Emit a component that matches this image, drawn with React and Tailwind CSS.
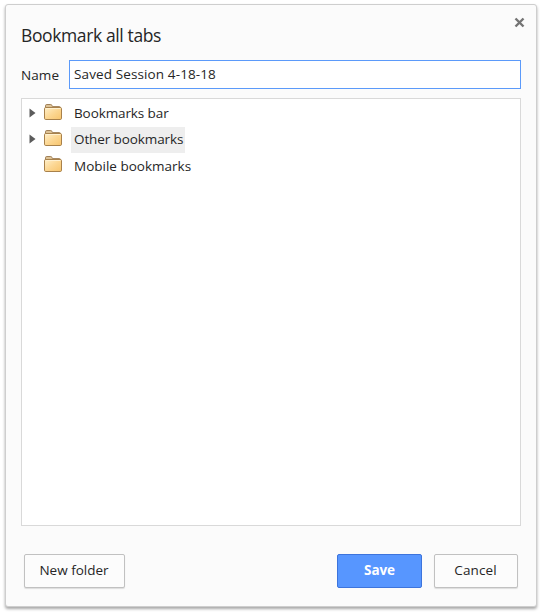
import React, { useId } from "react";

function FolderIcon() {
  const id = useId();
  return (
    <svg width="20" height="18" viewBox="0 0 20 18" className="mb-[4px] shrink-0">
      <defs>
        <linearGradient id={id} x1="0" y1="0" x2="1" y2="1">
          <stop offset="0" stopColor="#fff0cb" />
          <stop offset="0.5" stopColor="#fcd793" />
          <stop offset="1" stopColor="#f7c46c" />
        </linearGradient>
      </defs>
      <path d="M2.5 5V2.8Q2.5 1.5 3.8 1.5H7.7Q8.7 1.5 9 2.6L9.4 3.6H16.5Q17.5 3.6 17.5 5" fill="#dcc296" stroke="#a18058" />
      <rect x="1.5" y="4.5" width="17" height="12" rx="1.3" fill={`url(#${id})`} stroke="#a8814b" />
      <path d="M2.5 5.5H17.5" stroke="#fff1d0" />
    </svg>
  );
}

function TreeRow({ label, expandable, selected }) {
  return (
    <div className="flex h-[26px] items-center">
      <span className="flex w-[21px] shrink-0 pb-[2px] pl-[7px]">
        {expandable && (
          <svg width="7" height="10" viewBox="0 0 7 10">
            <path d="M.5.5L6.5 5L.5 9.5Z" fill="#5c5c5c" />
          </svg>
        )}
      </span>
      <FolderIcon />
      <span className={`ml-2 flex h-[26px] items-center px-[3px] ${selected ? "bg-[#eeeeee] pr-[2px] pb-px" : ""} ${expandable ? "pb-px" : "tracking-[0px]"}`}>
        {label}
      </span>
    </div>
  );
}

export default function App() {
  return (
    <div className="h-[615px] w-[544px] overflow-hidden bg-white pt-1 pl-[5px] font-['Open_Sans','Noto_Sans',sans-serif] text-[13.5px] tracking-[-0.1px] text-[#262626]">
      <div className="relative flex h-[603px] w-[532px] flex-col rounded-[3px] border border-[#cecece] bg-[#fbfbfb] px-[15px] shadow-[0_2px_3px_rgba(0,0,0,0.35)]">
        <button aria-label="Close" className="absolute top-[12px] right-[11px]">
          <svg width="11" height="11" viewBox="0 0 11 11" className="block">
            <path d="M1.5 1.5L9.5 9.5M9.5 1.5L1.5 9.5" stroke="#747474" strokeWidth="2.4" />
          </svg>
        </button>
        <h1 className="mt-[17px] h-[26px] text-[17.5px] leading-[26px] tracking-[-0.38px]">Bookmark all tabs</h1>
        <label className="mt-[12px] flex h-[29px] items-center">
          <span className="w-[48px] pt-[2px] tracking-[0.1px]">Name</span>
          <input
            defaultValue="Saved Session 4-18-18"
            className="h-[29px] w-[452px] border border-[#5b9afa] bg-white px-1 pb-[2px] tracking-[0.12px] outline-none"
          />
        </label>
        <div className="mt-[9px] h-[428px] w-[500px] border border-[#d9d9d9] bg-white pt-[2px]">
          <TreeRow label="Bookmarks bar" expandable />
          <TreeRow label="Other bookmarks" expandable selected />
          <TreeRow label="Mobile bookmarks" />
        </div>
        <div className="mt-[28px] flex w-[500px] pr-[3px] pl-[3px]">
          <button className="h-[34px] w-[101px] rounded-xs border border-[#c1c1c1] bg-[#fcfcfc] pr-px pb-px tracking-[0px] shadow-[0_1px_1px_rgba(0,0,0,0.12)]">New folder</button>
          <button className="ml-auto h-[34px] w-[85px] rounded-xs border border-[#3d74dc] bg-[#5796ff] pb-px font-bold text-white">Save</button>
          <button className="ml-3 h-[34px] w-[84px] rounded-xs border border-[#c1c1c1] bg-[#fcfcfc] pr-px pb-px tracking-[0.1px] shadow-[0_1px_1px_rgba(0,0,0,0.12)]">Cancel</button>
        </div>
      </div>
    </div>
  );
}
